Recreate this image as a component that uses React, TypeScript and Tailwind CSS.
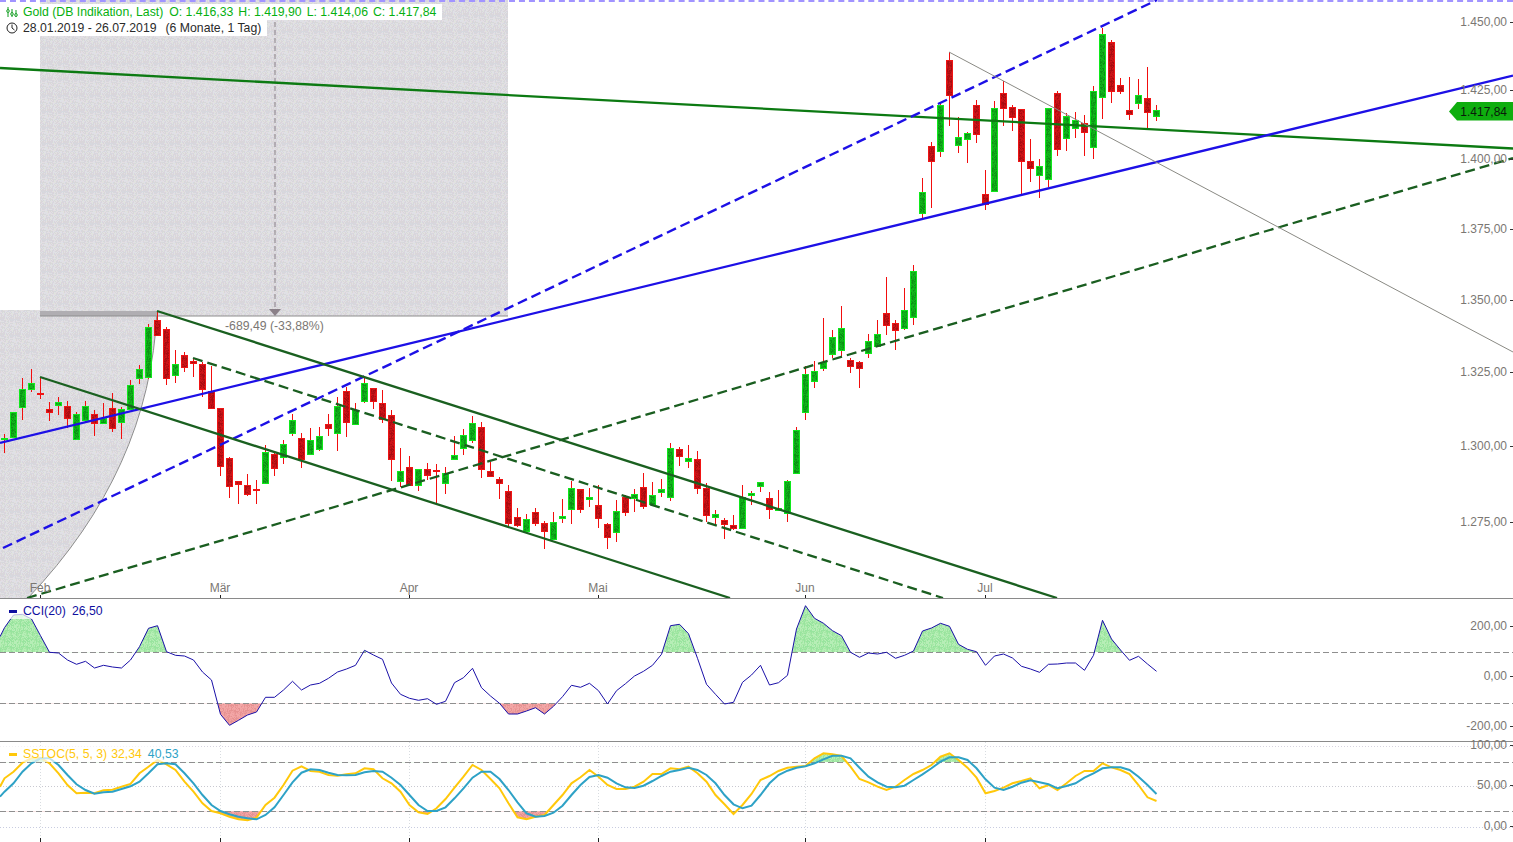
type Candle = [number, number, number, number, "g" | "r"];

// hi, body top, body bottom, lo (all pixel y), colour
const candles: Candle[] = [
  [434, 438, 439, 453, "g"], [412, 412, 437, 437, "g"], [378, 389, 407, 420, "g"], [369, 383, 389, 392, "g"],
  [377, 393, 394, 399, "r"], [402, 409, 412, 421, "r"], [397, 402, 405, 415, "g"], [401, 406, 418, 428, "r"],
  [412, 414, 439, 439, "g"], [401, 406, 420, 423, "g"], [410, 414, 423, 436, "r"], [403, 418, 423, 423, "g"],
  [393, 408, 428, 432, "r"], [407, 409, 422, 439, "g"], [380, 385, 409, 410, "g"], [365, 369, 378, 384, "g"],
  [324, 327, 377, 379, "g"], [312, 320, 335, 335, "r"], [327, 329, 378, 385, "r"], [350, 364, 375, 383, "g"],
  [352, 355, 367, 372, "r"], [359, 361, 363, 377, "r"], [362, 364, 389, 397, "r"], [366, 391, 408, 409, "r"],
  [408, 408, 466, 476, "r"], [457, 458, 486, 498, "r"], [481, 481, 484, 504, "r"], [474, 485, 494, 496, "r"],
  [480, 489, 490, 504, "r"], [445, 452, 483, 483, "g"], [451, 454, 468, 476, "r"], [440, 444, 457, 464, "g"],
  [414, 420, 433, 436, "g"], [433, 438, 459, 468, "r"], [428, 440, 454, 454, "g"], [427, 436, 449, 451, "g"],
  [414, 424, 428, 436, "r"], [397, 406, 433, 451, "g"], [387, 391, 422, 437, "r"], [403, 410, 424, 425, "g"],
  [377, 383, 401, 403, "g"], [388, 388, 401, 409, "r"], [390, 403, 419, 423, "r"], [410, 415, 459, 481, "r"],
  [448, 471, 481, 487, "g"], [456, 467, 485, 485, "r"], [469, 469, 485, 491, "g"], [463, 469, 475, 480, "r"],
  [464, 470, 471, 504, "r"], [467, 473, 483, 494, "g"], [436, 455, 459, 459, "g"], [429, 435, 448, 455, "g"],
  [416, 423, 440, 443, "g"], [422, 427, 469, 478, "r"], [462, 471, 476, 476, "r"], [477, 479, 483, 499, "r"],
  [485, 491, 523, 527, "r"], [508, 517, 525, 527, "r"], [514, 519, 531, 533, "g"], [508, 512, 523, 526, "r"],
  [521, 523, 531, 549, "r"], [512, 522, 539, 539, "g"], [499, 516, 518, 523, "g"], [481, 488, 509, 524, "g"],
  [489, 489, 509, 513, "r"], [488, 497, 499, 507, "g"], [485, 505, 518, 528, "r"], [523, 524, 537, 549, "r"],
  [500, 511, 532, 542, "g"], [495, 497, 512, 516, "r"], [489, 494, 498, 512, "g"], [473, 487, 506, 509, "r"],
  [482, 495, 504, 504, "g"], [479, 489, 492, 497, "g"], [443, 448, 497, 501, "g"], [447, 449, 456, 466, "r"],
  [445, 458, 461, 468, "g"], [451, 459, 488, 494, "r"], [483, 488, 515, 522, "r"], [510, 514, 517, 526, "g"],
  [518, 520, 524, 539, "r"], [515, 525, 528, 530, "r"], [485, 497, 528, 528, "g"], [491, 493, 495, 505, "g"],
  [482, 482, 486, 492, "g"], [492, 498, 509, 519, "r"], [490, 508, 510, 510, "g"], [480, 481, 513, 522, "g"],
  [427, 430, 473, 473, "g"], [366, 374, 412, 420, "g"], [361, 371, 381, 388, "g"], [318, 362, 368, 371, "g"],
  [330, 337, 354, 358, "g"], [306, 328, 350, 358, "g"], [358, 360, 366, 373, "r"], [361, 362, 368, 388, "r"],
  [334, 341, 353, 358, "g"], [320, 334, 346, 347, "g"], [277, 313, 325, 335, "r"], [320, 323, 330, 350, "r"],
  [288, 310, 328, 330, "g"], [265, 271, 317, 325, "g"], [178, 192, 213, 220, "g"], [142, 146, 161, 208, "r"],
  [102, 105, 151, 157, "g"], [52, 60, 95, 126, "r"], [117, 137, 145, 153, "g"], [132, 133, 139, 163, "g"],
  [100, 105, 134, 143, "r"], [170, 194, 204, 210, "r"], [101, 108, 191, 191, "g"], [81, 93, 108, 126, "r"],
  [105, 107, 117, 131, "r"], [109, 109, 161, 194, "r"], [139, 161, 168, 182, "r"], [159, 166, 175, 198, "g"],
  [108, 108, 179, 187, "g"], [91, 93, 149, 156, "r"], [113, 116, 138, 151, "g"], [112, 120, 128, 138, "g"],
  [115, 123, 132, 156, "r"], [86, 91, 147, 159, "g"], [28, 34, 97, 119, "g"], [40, 42, 91, 103, "r"],
  [78, 85, 91, 94, "r"], [77, 110, 114, 120, "r"], [79, 95, 103, 109, "g"], [67, 98, 112, 128, "r"],
  [105, 110, 116, 121, "g"],
];

// indicator values are read off at 3x, one per candle
const cciRaw = [
  98, 60, 58, 72, 122, 172, 174, 195, 208, 199, 219, 211, 216, 219, 195, 155, 100, 92, 170, 181, 183, 195, 231, 255,
  358, 391, 376, 360, 351, 307, 307, 285, 259, 285, 270, 265, 250, 231, 222, 211, 166, 180, 193, 264, 298, 310, 316,
  311, 328, 319, 263, 248, 220, 278, 303, 325, 357, 357, 348, 338, 357, 334, 305, 271, 277, 265, 287, 327, 287, 266,
  243, 229, 211, 178, 92, 88, 116, 190, 268, 298, 327, 322, 262, 240, 211, 270, 263, 241, 102, 32, 70, 85, 107, 122,
  172, 187, 174, 177, 172, 190, 181, 168, 108, 99, 85, 94, 148, 163, 170, 211, 183, 177, 189, 214, 222, 232, 208,
  207, 204, 204, 226, 181, 76, 132, 165, 196, 184, 207, 229,
];

const slowRaw = [
  550, 530, 503, 490, 488, 505, 535, 570, 595, 593, 595, 586, 584, 575, 567, 535, 515, 495, 508, 525, 560, 590, 625,
  648, 655, 665, 673, 676, 668, 630, 608, 570, 527, 514, 528, 530, 540, 542, 538, 535, 520, 523, 550, 565, 590, 630,
  652, 657, 640, 612, 578, 545, 510, 525, 552, 580, 625, 667, 673, 665, 660, 630, 600, 565, 547, 525, 545, 570, 582,
  582, 575, 560, 537, 537, 520, 523, 515, 535, 560, 600, 628, 657, 630, 597, 555, 543, 528, 518, 515, 513, 490, 475,
  478, 483, 515, 552, 562, 575, 585, 575, 555, 537, 525, 510, 485, 475, 495, 518, 548, 595, 588, 578, 565, 558, 550,
  580, 570, 585, 565, 543, 528, 528, 505, 517, 525, 537, 570, 607, 618,
];

const signalRaw = [
  590, 565, 530, 505, 490, 490, 510, 540, 568, 585, 596, 592, 590, 582, 574, 560, 535, 508, 505, 508, 535, 565, 600,
  630, 648, 658, 665, 670, 673, 660, 637, 600, 562, 533, 523, 525, 533, 540, 541, 540, 532, 528, 530, 548, 570, 600,
  630, 648, 648, 637, 610, 580, 548, 530, 530, 552, 585, 622, 655, 665, 663, 653, 632, 600, 570, 546, 540, 548, 565,
  577, 579, 572, 558, 543, 530, 525, 518, 525, 540, 565, 600, 628, 640, 632, 600, 565, 540, 527, 518, 514, 505, 493,
  482, 482, 490, 518, 545, 562, 575, 577, 572, 555, 538, 520, 500, 487, 487, 495, 520, 553, 578, 585, 575, 563, 556,
  562, 568, 580, 573, 565, 548, 535, 520, 517, 517, 525, 545, 570, 597,
];

const toPoints = (raw: number[], startZ: number) => {
  const pts = raw.map((z, i) => [4.5 + 9 * i, 595 + z / 3]);
  return [[0, 595 + startZ / 3], ...pts];
};

const line = (pts: number[][]) => pts.map((p) => p[0].toFixed(1) + "," + p[1].toFixed(1)).join(" ");
const area = (pts: number[][], level: number) =>
  `0,${level} ` + line(pts) + ` ${pts[pts.length - 1][0].toFixed(1)},${level}`;

const months = [
  { x: 40, name: "Feb" },
  { x: 220, name: "Mär" },
  { x: 409, name: "Apr" },
  { x: 598, name: "Mai" },
  { x: 805, name: "Jun" },
  { x: 985, name: "Jul" },
];

const priceLabels = [
  { y: 22, text: "1.450,00" },
  { y: 90, text: "1.425,00" },
  { y: 159, text: "1.400,00" },
  { y: 229, text: "1.375,00" },
  { y: 300, text: "1.350,00" },
  { y: 372, text: "1.325,00" },
  { y: 446, text: "1.300,00" },
  { y: 522, text: "1.275,00" },
];

const W = 1513;
const NOISE = 16;

// the old chart dithers its fills, a small repeating noise tile gets close
function Noise({ id, colors }: { id: string; colors: string[] }) {
  const cells = [];
  let seed = 17;
  for (let y = 0; y < NOISE; y++) {
    for (let x = 0; x < NOISE; x++) {
      seed = (seed * 137 + 71) % 1009;
      cells.push(<rect key={x + "-" + y} x={x} y={y} width={1} height={1} fill={colors[seed % colors.length]} />);
    }
  }
  return (
    <pattern id={id} x={0} y={0} width={NOISE} height={NOISE} patternUnits="userSpaceOnUse" shapeRendering="crispEdges">
      {cells}
    </pattern>
  );
}

const boxColors = ["#e2dde4", "#d6d8da", "#d9d5dd", "#e0e3de", "#d6d8df", "#e4dfe2", "#dfe1e6", "#dad6d8"];
const greenColors = ["#0b9214", "#12b41c", "#0ea418"];
const redColors = ["#a80c10", "#cc1418", "#b81014"];
const softGreen = ["#98e49e", "#b6eeb6", "#a6e8a6"];
const softRed = ["#e69292", "#f2a6a6", "#ee9c9c"];

function AxisLabel({ y, text }: { y: number; text: string }) {
  return (
    <g>
      <text x={1507} y={y + 4} textAnchor="end" fontSize={12} fill="#7b7773">
        {text}
      </text>
      <rect x={1510} y={y} width={3} height={1} fill="#333" />
    </g>
  );
}

function PriceChart() {
  return (
    <svg viewBox={`0 0 ${W} 598`} className="block w-full h-full">
      <defs>
        <Noise id="boxNoise" colors={boxColors} />
        <Noise id="greenBody" colors={greenColors} />
        <Noise id="redBody" colors={redColors} />
      </defs>

      {/* measure box and arc */}
      <rect x={40} y={0} width={468} height={316} fill="url(#boxNoise)" />
      <path d="M0 310 L157 310 Q150 470 28 598 L0 598 Z" fill="url(#boxNoise)" />
      <path d="M157 311 Q150 470 28 598" fill="none" stroke="#8c8c8c" strokeWidth={1} />
      <rect x={40} y={311} width={117} height={5} fill="#b0aeb2" />
      <rect x={40} y={315.5} width={468} height={1} fill="#8e8e8e" />
      <line x1={275} y1={22} x2={275} y2={310} stroke="#8a8088" strokeDasharray="5 3" />
      <polygon points="269,309 281,309 275,316" fill="#8a8088" />

      {candles.map((c, i) => {
        const x = 4 + 9 * i;
        const up = c[4] === "g";
        return (
          <g key={i}>
            <rect x={x} y={c[0]} width={1} height={c[3] - c[0]} fill="#f20d0d" />
            <rect
              x={x - 2.5}
              y={c[1] + 0.5}
              width={6}
              height={Math.max(c[2] - c[1], 1)}
              fill={up ? "url(#greenBody)" : "url(#redBody)"}
              stroke={up ? "#10e81c" : "#f01414"}
            />
          </g>
        );
      })}

      <line x1={0} y1={68} x2={W} y2={148.5} stroke="#0c7a12" strokeWidth={2.3} />
      <line x1={0} y1={443} x2={W} y2={75.5} stroke="#1d10e6" strokeWidth={2.3} />
      <line x1={3} y1={548} x2={1157} y2={0} stroke="#1d10e6" strokeWidth={2.4} strokeDasharray="10 5" />
      <line x1={27} y1={598} x2={W} y2={158} stroke="#1a5e20" strokeWidth={2.3} strokeDasharray="10 5" />
      <line x1={157} y1={311} x2={1057} y2={598} stroke="#1a6020" strokeWidth={2.3} />
      <line x1={193} y1={358} x2={943} y2={598} stroke="#1a5e20" strokeWidth={2.3} strokeDasharray="10 5" />
      <line x1={40} y1={377} x2={730} y2={598} stroke="#1a6020" strokeWidth={2.3} />
      <line x1={949} y1={52} x2={W} y2={352} stroke="#8a8a84" strokeWidth={1} />

      <text x={225} y={330} fontSize={12.25} fill="#7b7773">
        -689,49 (-33,88%)
      </text>

      {months.map((m) => (
        <g key={m.name}>
          <text x={m.x} y={592} textAnchor="middle" fontSize={12} fill="#7b7773">
            {m.name}
          </text>
          <rect x={m.x} y={595} width={1} height={3} fill="#222" />
        </g>
      ))}

      {priceLabels.map((l) => (
        <AxisLabel key={l.text} y={l.y} text={l.text} />
      ))}

      <polygon points="1449,111.5 1457,102 1513,102 1513,120.5 1457,120.5" fill="#0fae0f" />
      <text x={1507} y={115.5} textAnchor="end" fontSize={12} fill="#0a1a0a">
        1.417,84
      </text>
    </svg>
  );
}

function CciChart() {
  const pts = toPoints(cciRaw, 125);
  return (
    <svg viewBox={`0 599 ${W} 142`} className="block w-full h-full">
      <defs>
        <Noise id="cciGreen" colors={softGreen} />
        <Noise id="cciRed" colors={softRed} />
        <clipPath id="cciTop">
          <rect x={0} y={599} width={W} height={53.3} />
        </clipPath>
        <clipPath id="cciBottom">
          <rect x={0} y={703.3} width={W} height={40} />
        </clipPath>
      </defs>
      <polygon points={area(pts, 652.3)} fill="url(#cciGreen)" clipPath="url(#cciTop)" />
      <polygon points={area(pts, 703.3)} fill="url(#cciRed)" clipPath="url(#cciBottom)" />
      <line x1={0} y1={652.5} x2={W} y2={652.5} stroke="#8f8f8f" strokeDasharray="6 3" />
      <line x1={0} y1={703.5} x2={W} y2={703.5} stroke="#8f8f8f" strokeDasharray="6 3" />
      <polyline points={line(pts)} fill="none" stroke="#1a10a8" strokeWidth={1} />
      <AxisLabel y={626} text="200,00" />
      <AxisLabel y={676} text="0,00" />
      <AxisLabel y={726} text="-200,00" />
    </svg>
  );
}

function StochChart() {
  const slow = toPoints(slowRaw, 575);
  const signal = toPoints(signalRaw, 605);
  return (
    <svg viewBox={`0 742 ${W} 100`} className="block w-full h-full overflow-visible">
      <defs>
        <Noise id="stochGreen" colors={softGreen} />
        <Noise id="stochRed" colors={softRed} />
        <clipPath id="stochTop">
          <rect x={0} y={742} width={W} height={20.3} />
        </clipPath>
        <clipPath id="stochBottom">
          <rect x={0} y={811} width={W} height={31} />
        </clipPath>
      </defs>
      <line x1={0} y1={746.5} x2={W} y2={746.5} stroke="#d8d4e0" strokeDasharray="1 2" />
      <line x1={0} y1={786.5} x2={W} y2={786.5} stroke="#c8c8d0" strokeDasharray="1 2" />
      <line x1={0} y1={827.5} x2={W} y2={827.5} stroke="#c8cce0" strokeDasharray="1 2" />
      {months.map((m) => (
        <g key={m.name}>
          <line x1={m.x + 0.5} y1={742} x2={m.x + 0.5} y2={836} stroke="#d8dce0" strokeDasharray="1 2" />
          <rect x={m.x} y={838} width={1} height={4} fill="#222" />
        </g>
      ))}
      <polygon points={area(slow, 762.3)} fill="url(#stochGreen)" clipPath="url(#stochTop)" />
      <polygon points={area(slow, 811.2)} fill="url(#stochRed)" clipPath="url(#stochBottom)" />
      <line x1={0} y1={762.5} x2={W} y2={762.5} stroke="#8f8f8f" strokeDasharray="6 3" />
      <line x1={0} y1={811.5} x2={W} y2={811.5} stroke="#8f8f8f" strokeDasharray="6 3" />
      <polyline points={line(slow)} fill="none" stroke="#ffc80a" strokeWidth={2} />
      <polyline points={line(signal)} fill="none" stroke="#2ea2c6" strokeWidth={2} />
      <AxisLabel y={745} text="100,00" />
      <AxisLabel y={785} text="50,00" />
      <AxisLabel y={826} text="0,00" />
    </svg>
  );
}

function CandleIcon() {
  return (
    <svg viewBox="0 0 12 12" className="w-3 h-3" fill="none" stroke="#0a9a1a" strokeWidth={1}>
      <path d="M2 1v10M6 3v8M10 4v7" />
      <ellipse cx={2} cy={5} rx={1.2} ry={1.5} fill="#fff" />
      <ellipse cx={6} cy={8} rx={1.2} ry={1.5} fill="#fff" />
      <ellipse cx={10} cy={9} rx={1.2} ry={1.5} fill="#fff" />
    </svg>
  );
}

function ClockIcon() {
  return (
    <svg viewBox="0 0 12 12" className="w-3 h-3" fill="none" stroke="#222" strokeWidth={1}>
      <circle cx={6} cy={6} r={5} />
      <path d="M6 2.5V6L8.5 8" />
    </svg>
  );
}

export default function App() {
  return (
    <div className="flex flex-col w-[1513px] h-[842px] overflow-hidden bg-white font-['Liberation_Sans',Arial,sans-serif] text-[12.25px]">
      {/* price panel */}
      <div className="relative h-[599px] border-b border-[#8a8a8a]">
        <div className="absolute left-0 right-0 top-0 h-0.5 border-t-2 border-dashed border-[#a194ff]" />
        <PriceChart />
        <div className="absolute left-0 top-[4px] flex flex-col items-start leading-4">
          <div className="flex items-center h-4 pl-1.5 pr-1.5 bg-white text-[#06b010]">
            <CandleIcon />
            <span className="ml-[5px]">Gold (DB Indikation, Last)</span>
            <span className="ml-1.5">O: 1.416,33</span>
            <span className="ml-[5px]">H: 1.419,90</span>
            <span className="ml-[5px]">L: 1.414,06</span>
            <span className="ml-[5px]">C: 1.417,84</span>
          </div>
          <div className="flex items-center h-4 pl-1.5 pr-1.5 bg-white text-[#2a2a2a]">
            <ClockIcon />
            <span className="ml-[5px]">28.01.2019 - 26.07.2019</span>
            <span className="ml-[9px]">(6 Monate, 1 Tag)</span>
          </div>
        </div>
      </div>

      {/* CCI panel */}
      <div className="relative h-[143px] border-b border-[#8a8a8a]">
        <CciChart />
        <div className="absolute left-0 top-[4px] flex items-center h-4 pl-[9px] pr-1 bg-white/70 text-[#0f0fa0]">
          <span className="w-2 h-[3px] bg-[#0f0fa0]" />
          <span className="ml-1.5">CCI(20)</span>
          <span className="ml-1.5">26,50</span>
        </div>
      </div>

      {/* stochastic panel */}
      <div className="relative h-[100px]">
        <StochChart />
        <div className="absolute left-0 top-[4px] flex items-center h-4 pl-[9px] pr-1 bg-white/70 text-[#ffc80a]">
          <span className="w-2 h-[3px] bg-[#ffc80a]" />
          <span className="ml-1.5">SSTOC(5, 5, 3)</span>
          <span className="ml-1">32,34</span>
          <span className="ml-1.5 text-[#2ea2c6]">40,53</span>
        </div>
      </div>
    </div>
  );
}
